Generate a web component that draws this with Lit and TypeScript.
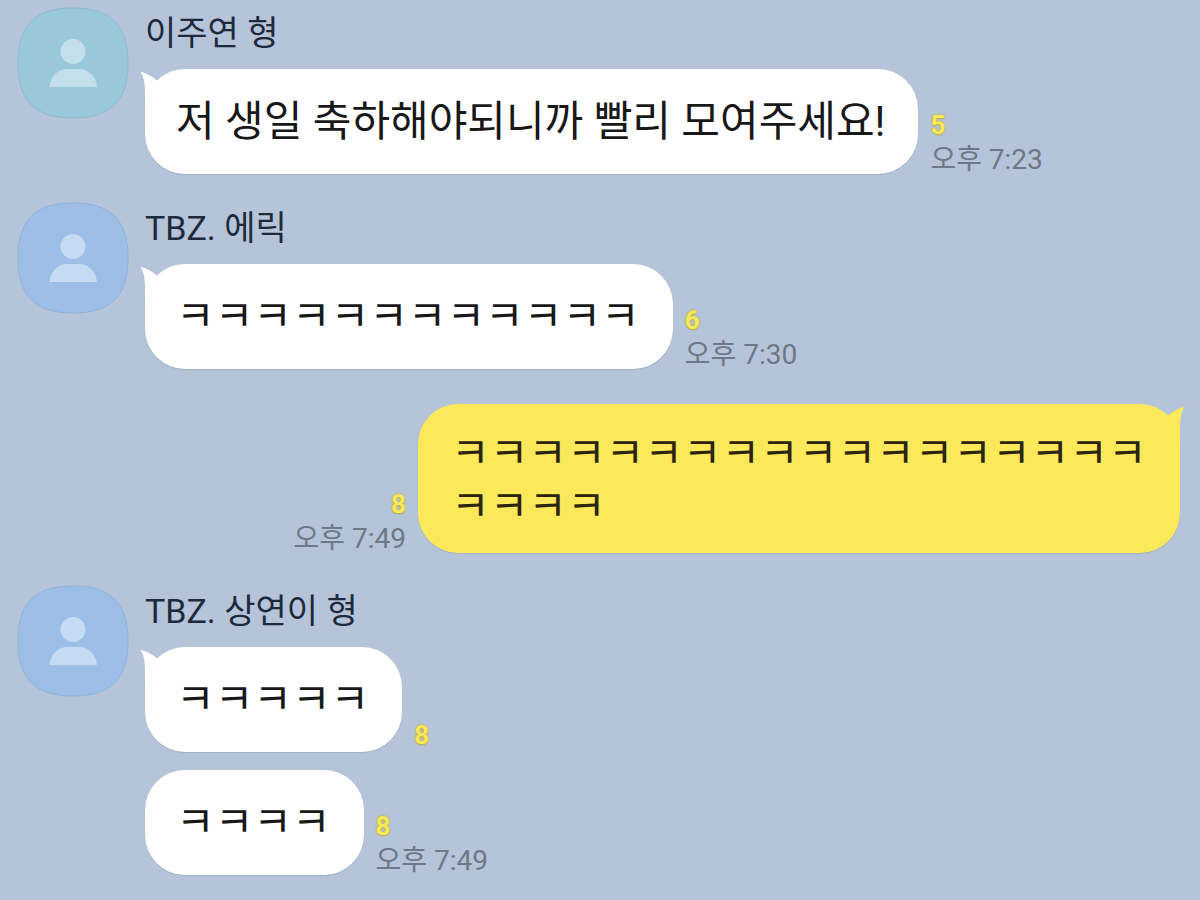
import { LitElement, html, css, nothing } from "lit";
import { customElement, property } from "lit/decorators.js";

interface Message {
  text: string;
  unread: number;
  time?: string;
}

interface Group {
  sender?: string;
  tone?: "teal" | "blue";
  messages: Message[];
}

const CONVERSATION: Group[] = [
  {
    sender: "이주연 형",
    tone: "teal",
    messages: [
      { text: "저 생일 축하해야되니까 빨리 모여주세요!", unread: 5, time: "오후 7:23" },
    ],
  },
  {
    sender: "TBZ. 에릭",
    tone: "blue",
    messages: [{ text: "ㅋ".repeat(12), unread: 6, time: "오후 7:30" }],
  },
  {
    messages: [{ text: "ㅋ".repeat(22), unread: 8, time: "오후 7:49" }],
  },
  {
    sender: "TBZ. 상연이 형",
    tone: "blue",
    messages: [
      { text: "ㅋ".repeat(5), unread: 8 },
      { text: "ㅋ".repeat(4), unread: 8, time: "오후 7:49" },
    ],
  },
];

@customElement("chat-avatar")
export class ChatAvatar extends LitElement {
  @property() tone = "blue";

  static styles = css`
    :host {
      display: block;
      flex: none;
      width: 112px;
      height: 112px;
    }
    .icon {
      display: block;
      width: 100%;
      height: 100%;
    }
    .teal {
      fill: #9ac8db;
      stroke: #8dbbd0;
    }
    .blue {
      fill: #9dbfe7;
      stroke: #90b3dc;
    }
    .teal-person {
      fill: #c3dfec;
    }
    .blue-person {
      fill: #c5daf3;
    }
  `;

  render() {
    return html`
      <svg class="icon" viewBox="0 0 112 112" aria-hidden="true">
        <path
          class=${this.tone}
          d="M56 1C94 1 111 18 111 56S94 111 56 111S1 94 1 56S18 1 56 1Z"
        />
        <g class="${this.tone}-person">
          <circle cx="56" cy="44.500" r="12.500" />
          <path d="M32.500 80C33.500 69 41 62 50 62H62C71 62 79 69 80 80Z" />
        </g>
      </svg>
    `;
  }
}

@customElement("chat-message")
export class ChatMessage extends LitElement {
  @property({ attribute: false }) message!: Message;
  @property({ type: Boolean }) mine = false;
  @property({ type: Boolean }) tail = false;

  static styles = css`
    :host {
      display: block;
    }
    .row {
      display: flex;
      align-items: flex-end;
      gap: 12px;
    }
    .row.mine {
      flex-direction: row-reverse;
    }
    .bubble {
      position: relative;
      box-sizing: border-box;
      max-width: 780px;
      padding: 26px 33px 26px 31px;
      border-radius: 40px;
      background: #fff;
      color: #181818;
      font-size: 42px;
      line-height: 53px;
      overflow-wrap: anywhere;
      box-shadow: 0 1px 1px rgba(90, 105, 130, 0.2);
    }
    .mine .bubble {
      max-width: 762px;
      padding: 23px 33px 20px;
      background: #fbe95b;
      color: #2c240c;
    }
    .tail {
      position: absolute;
      top: 0;
      left: -6px;
      width: 24px;
      height: 44px;
      fill: #fff;
    }
    .mine .tail {
      left: auto;
      right: -6px;
      transform: scaleX(-1);
      fill: #fbe95b;
    }
    .meta {
      display: flex;
      flex: none;
      flex-direction: column;
      align-items: flex-start;
      gap: 4px;
      white-space: nowrap;
    }
    .mine .meta {
      align-items: flex-end;
    }
    .unread {
      color: #f7e85a;
      font-size: 26px;
      font-weight: 700;
      line-height: 34px;
      text-shadow: 0 0 2px #bdb04a, 0 0 2px #bdb04a, 0 1px 1px #bdb04a;
    }
    .time {
      color: #6d7988;
      font-size: 28px;
      line-height: 28px;
    }
  `;

  render() {
    const { text, unread, time } = this.message;
    return html`
      <div class="row ${this.mine ? "mine" : ""}">
        <div class="bubble">
          ${this.tail
            ? html`<svg class="tail" viewBox="0 0 24 44" aria-hidden="true">
                <path d="M1.500 3C8 4 14 8 18.500 12L24 16V30L6 44V24C6 15 5 8 1.500 3Z" />
              </svg>`
            : nothing}${text}
        </div>
        <div class="meta">
          <span class="unread">${unread}</span>
          ${time ? html`<time class="time">${time}</time>` : nothing}
        </div>
      </div>
    `;
  }
}

@customElement("app-root")
export class AppRoot extends LitElement {
  static styles = css`
    :host {
      display: block;
      box-sizing: border-box;
      min-height: 100vh;
      padding: 7px 20px 24px 17px;
      background: #b5c4d8;
      font-family: Roboto, "Noto Sans CJK KR", sans-serif;
    }
    .chat {
      display: flex;
      flex-direction: column;
      gap: 28px;
    }
    .group {
      display: flex;
      gap: 16px;
    }
    .group.mine {
      justify-content: flex-end;
      padding: 7px 0 4px;
    }
    .body {
      display: flex;
      flex-direction: column;
      gap: 18px;
      min-width: 0;
    }
    .name {
      margin: 0 0 -8px;
      color: #1d2a3b;
      font-size: 34px;
      font-weight: 400;
      line-height: 52px;
    }
  `;

  render() {
    return html`
      <main class="chat">
        ${CONVERSATION.map(
          (group) => html`
            <section class="group ${group.sender ? "" : "mine"}">
              ${group.sender
                ? html`<chat-avatar tone=${group.tone ?? "blue"}></chat-avatar>`
                : nothing}
              <div class="body">
                ${group.sender ? html`<h2 class="name">${group.sender}</h2>` : nothing}
                ${group.messages.map(
                  (message, index) => html`
                    <chat-message
                      .message=${message}
                      ?mine=${!group.sender}
                      ?tail=${index === 0}
                    ></chat-message>
                  `
                )}
              </div>
            </section>
          `
        )}
      </main>
    `;
  }
}
